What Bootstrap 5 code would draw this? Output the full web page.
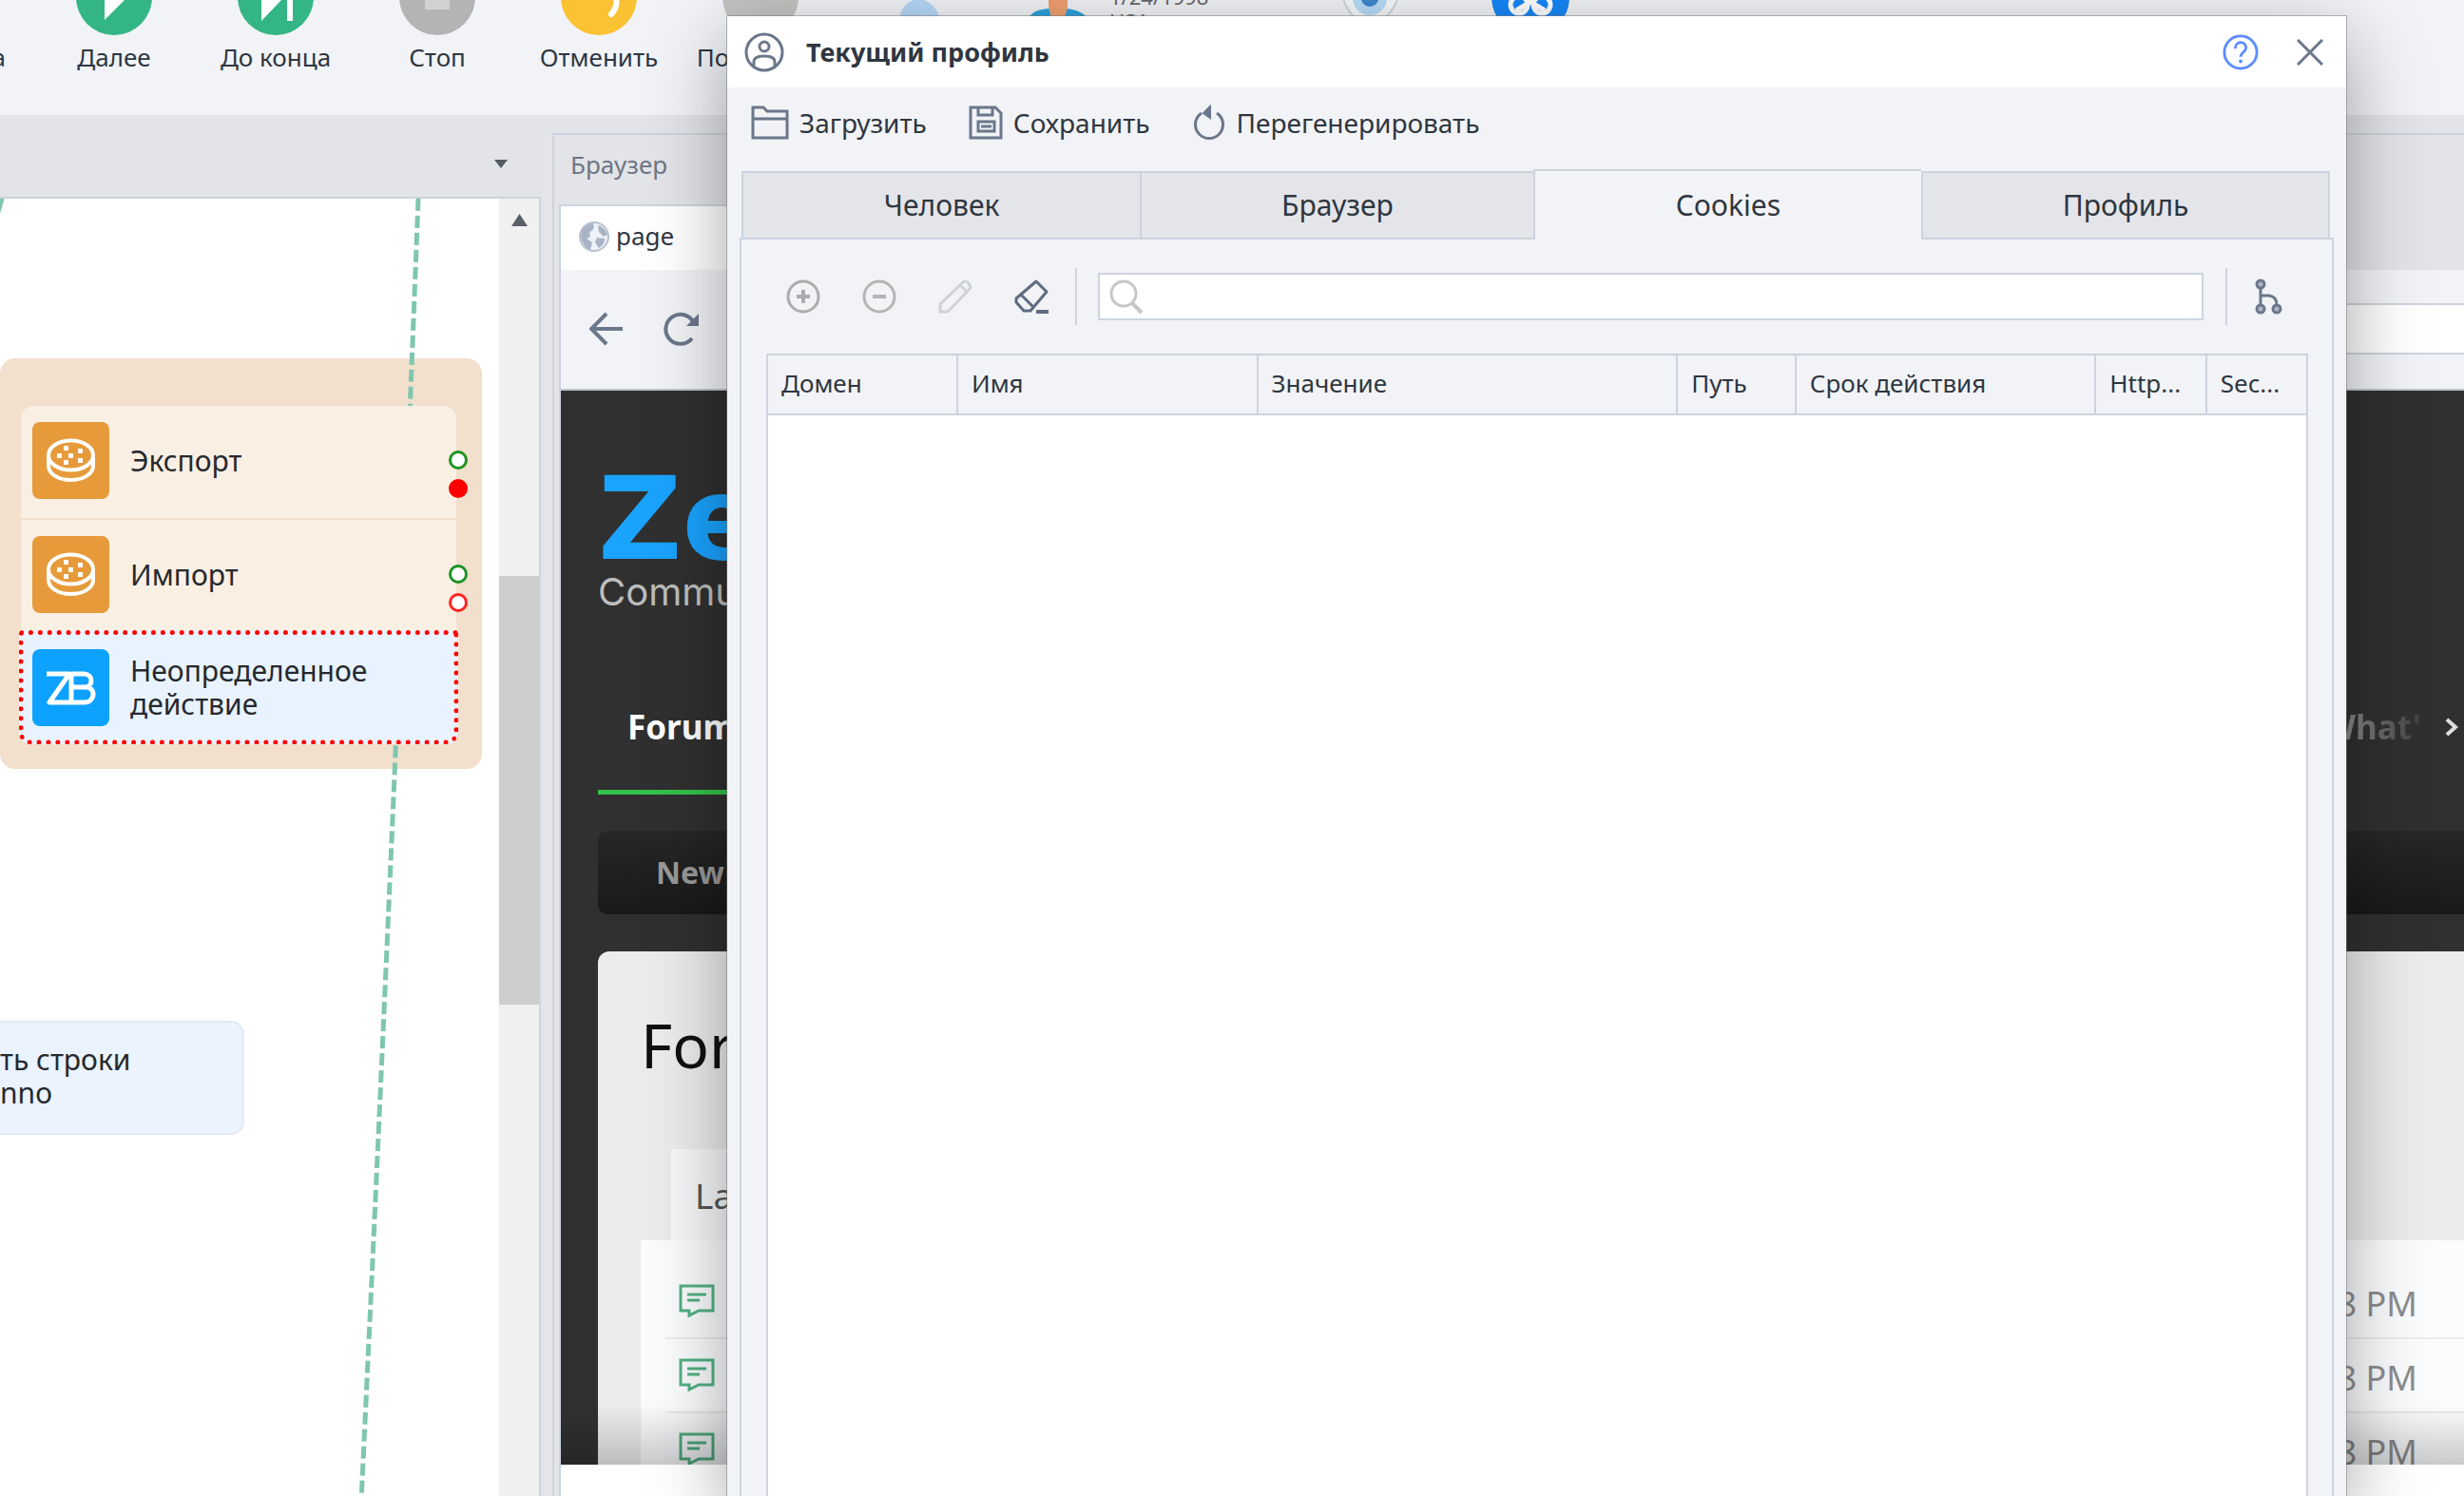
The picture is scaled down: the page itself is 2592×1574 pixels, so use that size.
<!DOCTYPE html>
<html lang="ru">
<head>
<meta charset="utf-8">
<meta name="viewport" content="width=device-width, initial-scale=1">
<title>Текущий профиль</title>
<link href="https://cdn.jsdelivr.net/npm/bootstrap@5.3.0/dist/css/bootstrap.min.css" rel="stylesheet">
<style>
:root{--line:#cdd3df;--chrome:#e3e4e8;--pane:#f1f3f7;--ink:#2f3640;--icon:#6b778a}
body{font-family:"Noto Sans","Open Sans",sans-serif;color:var(--ink);background:var(--chrome);line-height:1.2}
button{font:inherit;color:inherit}
svg{display:block;flex:none}
.plain-btn{background:none;border:0;padding:0}

/* main toolbar, scrolled under the window's top edge */
.top-bar{height:121px;background:var(--pane);overflow:hidden}
.top-items{margin:-43px 0 0 -135px}
.run-btn{width:170px;font-size:26px;line-height:36px;white-space:nowrap}
.run-btn svg{margin-bottom:5px}
.run-far{text-align:right;padding-right:29px}
.status-set{margin-left:62px}
.status-text{width:110px;font-size:22px;line-height:26px;color:#666}

/* script canvas */
.script-pane{width:569px}
.dock-head{height:86px;padding-right:35px}
.canvas-wrap{border:2px solid var(--line);border-left:0;border-bottom:0}
.graph{background:#fff;overflow:hidden}
.graph-line{position:absolute;left:0;top:0}
.node-group{position:absolute;left:0;top:168px;width:507px;height:432px;background:#f2e0cd;border-radius:16px}
.node-stack{position:absolute;left:0;top:168px;width:507px;padding:50px 27px 0 22px}
.node-item{height:120px;padding:0 12px 4px;gap:22px;font-size:30px;line-height:35px;background:#faefe3;border-bottom:2px solid #f2e0cd;color:#26292e}
.node-item:first-child{border-radius:14px 14px 0 0}
.node-item.is-current{background:#e9f3ff;border:5px dotted #f00;border-radius:4px 4px 12px 12px;margin:-4px -2px 0;padding:0 9px}
.node-port{position:absolute;right:-12px;width:20px;height:20px;border-radius:50%;border:3px solid #1c9420;background:#fff}
.port-ok{top:47px}
.port-fail{top:77px;border-color:#f22}
.port-linked{background:#f00;border-color:#f00}
.node-single{position:absolute;left:-22px;top:865px;width:279px;height:120px;padding:21px 20px;font-size:30px;line-height:35px;background:#eaf3fe;border:2px solid #e3eaf5;border-radius:14px;color:#26292e}
.scroll-track{width:42px;background:#f0f0f0}
.scroll-arrow{height:397px;padding:16px 0 0 13px}
.scroll-thumb{height:451px;background:#cdcdcd}

/* browser dock */
.browser-pane{margin:19px 0 0 12px;border:2px solid var(--line);border-right:0;border-bottom:0;min-width:0}
.browser-title{height:73px;padding:13px 17px;font-size:26px;line-height:36px;color:#6d7685}
.browser-inner{margin-left:5px;border-left:2px solid var(--line)}
.tab-row{height:69px;background:var(--chrome)}
.page-tab{width:300px;padding:0 19px 3px;gap:7px;font-size:26px;background:#fff;border-top:2px solid var(--line)}
.nav-row{height:127px;background:var(--pane);border-bottom:2px solid #bfc5cf;padding:0 0 2px 30px;gap:42px}
.address-box{height:54px;border:2px solid var(--line);border-right:0;background:#fff;border-radius:0}
.site{height:1130px;background:#303030;overflow:hidden;padding-left:39px}
.site-logo{margin-top:90px;font:bold 122px/90px "DejaVu Sans",sans-serif;color:#1aa3ff}
.site-sub{font:40px/48px Inter,sans-serif;color:#bdbdbd;margin-top:8px}
.site-nav{margin-top:85px;height:142px;font-size:35px;line-height:66px;font-weight:700}
.nav-current{width:200px;padding-left:31px;color:#fff;border-bottom:5px solid #35c24a;text-decoration:none;height:104px}
.nav-more{color:#fff;height:66px;gap:25px;padding-right:6px}
.nav-fade{background:linear-gradient(90deg,#a0a0a0 0,#6c6c6c 56px,#383838 110px);-webkit-background-clip:text;background-clip:text;color:transparent;text-decoration:none;white-space:nowrap}
.site-bar{height:88px;background:linear-gradient(#272727,#191919);border-radius:10px 0 0 10px;padding-left:61px;font-size:32px;line-height:88px;font-weight:700;color:#999}
.site-bar a,.post-tab{color:inherit;text-decoration:none}
.site-card{margin-top:39px;height:600px;background:#ececec;border-radius:12px 0 0 0;padding:55px 0 0 45px;color:#111}
.site-card h1{font-size:64px;line-height:87px;font-weight:400;margin:0 0 66px}
.post-tab{display:block;width:200px;height:96px;margin-left:32px;padding-left:25px;font-size:37px;line-height:98px;background:#f7f8f9;color:#555}
.post-list{background:#fbfcfe;padding:26px 0 0 26px;margin:0}
.post-item{height:78px;padding:0 49px 0 14px;border-bottom:2px solid #ececec;font-size:36px;color:#8d8d8d}
.post-item span{padding-top:6px}
.fold{position:absolute;left:0;right:0;bottom:0;height:64px;background:linear-gradient(transparent,rgba(0,0,0,.2))}

/* profile dialog */
.profile-win{position:absolute;left:765px;right:124px;top:17px;bottom:0;background:#f2f3f6;box-shadow:0 0 0 1px rgba(120,120,120,.5),0 24px 76px rgba(0,0,0,.36)}
.win-head{height:75px;padding:0 24px 0 18px;gap:32px;background:#fff}
.win-head h2{font-size:27px;font-weight:700;line-height:36px;margin:0 0 0 -9px}
.win-tools{height:73px;padding:0 25px;gap:44px;font-size:28px;line-height:36px}
.win-tools button{gap:11px}
.win-tabs{height:72px;padding:0 17px 0 15px;margin-top:13px}
.win-tab{flex:420 1 0;margin-top:2px;height:70px;background:#e4e5e8;border:2px solid var(--line);border-right:0;border-bottom:0;font-size:30px;padding-bottom:2px}
.win-tab.on{flex-grow:409;margin:0;height:74px;background:#f2f3f6;position:relative}
.win-tab:nth-child(2){flex-grow:414}
.win-tab:last-child{flex-grow:429;border-right:2px solid var(--line)}
.win-panel{margin:0 13px;border:2px solid var(--line);border-bottom:0;padding:30px 25px 0 26px}
.cookie-tools{height:60px;margin-bottom:30px}
.tool-set{gap:42px;padding:0 27px 0 20px;border-right:2px solid var(--line);height:60px}
.find-box{height:50px;margin:0 23px 0 22px}
.find-box svg{position:absolute;left:12px;top:7px}
.find-box input{height:50px;border:2px solid var(--line);border-radius:0;padding-left:56px;font-size:25px}
.tree-set{border-left:2px solid var(--line);height:60px;padding:0 27px 0 28px}
.grid-wrap{background:#fff;border:2px solid var(--line);border-bottom:0}
.grid-head{table-layout:fixed;width:100%;margin:0}
.grid-head th{height:62px;padding:0 14px 1px;background:#f2f3f6;border:2px solid var(--line);border-top:0;font-size:26px;font-weight:400;vertical-align:middle;white-space:nowrap}
.grid-head th:first-child{border-left:0}
.grid-head th:last-child{border-right:0}
</style>
</head>
<body class="vh-100 overflow-hidden position-relative d-flex flex-column">
<svg width="0" height="0" class="position-absolute" aria-hidden="true">
  <symbol id="cookie" viewBox="0 0 81 81"><rect width="81" height="81" rx="8" fill="#e69a3a"/><g fill="none" stroke="#fff" stroke-width="4"><ellipse cx="40.500" cy="35" rx="23.500" ry="15.500"/><path d="M17 37v9c0 9 11 15 23.500 15S64 55 64 46v-9"/></g><g fill="#fff"><rect x="33" y="25" width="5" height="5"/><rect x="48" y="28" width="5" height="5"/><rect x="26" y="33" width="5" height="5"/><rect x="38" y="33" width="5" height="5"/><rect x="48" y="38" width="5" height="5"/><rect x="33" y="40" width="5" height="5"/></g></symbol>
  <symbol id="bubble" viewBox="0 0 38 36"><path d="M2 2h34v26H21l-10 5v-5H2z" fill="none" stroke="#52b182" stroke-width="3"/><path d="M9 11h20M9 17h13" stroke="#52b182" stroke-width="3"/></symbol>
</svg>

<header class="top-bar flex-shrink-0">
  <div class="top-items d-flex align-items-start">
    <button class="plain-btn run-btn run-far flex-shrink-0"><svg width="80" height="80" viewBox="0 0 80 80"><circle cx="40" cy="40" r="40" fill="#34b586"/></svg>Сначала</button>
    <button class="plain-btn run-btn flex-shrink-0"><svg class="mx-auto" width="80" height="80" viewBox="0 0 80 80"><circle cx="40" cy="40" r="40" fill="#34b586"/><path d="M30 22v42l21-21z" fill="#fff"/></svg>Далее</button>
    <button class="plain-btn run-btn flex-shrink-0"><svg class="mx-auto" width="80" height="80" viewBox="0 0 80 80"><circle cx="40" cy="40" r="40" fill="#34b586"/><path d="M25 22v43l21-22zM52 22h6v43h-6z" fill="#fff"/></svg>До конца</button>
    <button class="plain-btn run-btn flex-shrink-0"><svg class="mx-auto" width="80" height="80" viewBox="0 0 80 80"><circle cx="40" cy="40" r="40" fill="#b4b4b4"/><path d="M27 27h26v26H27z" fill="#d2d2d2"/></svg>Стоп</button>
    <button class="plain-btn run-btn flex-shrink-0"><svg class="mx-auto" width="80" height="80" viewBox="0 0 80 80"><circle cx="40" cy="40" r="40" fill="#fbc233"/><path d="M26 26h20c14 8 16 22 7 32" fill="none" stroke="#fff" stroke-width="6" stroke-linecap="round"/></svg>Отменить</button>
    <button class="plain-btn run-btn flex-shrink-0"><svg class="mx-auto" width="80" height="80" viewBox="0 0 80 80"><circle cx="40" cy="40" r="40" fill="#c3c3c2"/></svg>Повторить</button>
    <div class="status-set d-flex align-items-start">
      <svg width="136" height="80" viewBox="0 0 136 80"><path d="M-2 70c0-16 10-28 21-28s24 12 24 28v10H-2z" fill="#b5d8f8"/><path d="M28 80V58l10 14v8z" fill="#eef5fc"/></svg>
      <svg width="84" height="80" viewBox="0 0 84 80"><path d="M-2 80V66c2-12 14-13 22-14h18c10 1 22 4 24 14v14z" fill="#2da3dd"/><path d="M20 30h20v18c-1 12-6 20-10 20s-9-8-10-20z" fill="#f0a070"/></svg>
      <div class="status-text"><br>1/24/1998<br>USA</div>
    </div>
    <svg width="390" height="80" viewBox="0 0 390 80"><path d="M128 20l10 27c6 14 16 20 26 20s20-6 27-20l10-27z" fill="#f8f9fa" stroke="#cfd6dc" stroke-width="2"/><circle cx="164" cy="41" r="18" fill="#b8dcf8"/><circle cx="164" cy="41" r="9" fill="#3c88cc"/><circle cx="333" cy="40" r="41" fill="#1687f8"/><g fill="none" stroke="#fff" stroke-width="5"><circle cx="321" cy="48" r="9"/><circle cx="345" cy="48" r="9"/><path d="M315 34l33 20M351 34l-33 20"/></g></svg>
  </div>
</header>

<main class="d-flex flex-grow-1 overflow-hidden">
  <section class="script-pane d-flex flex-column flex-shrink-0">
    <div class="dock-head d-flex align-items-center justify-content-end flex-shrink-0">
      <button class="plain-btn pt-3" aria-label="Список вкладок"><svg width="14" height="9" viewBox="0 0 14 9"><path d="M0 0h14L7 9z" fill="#555b63"/></svg></button>
    </div>
    <div class="canvas-wrap d-flex flex-grow-1">
      <div class="graph flex-grow-1 position-relative">
        <div class="node-group"></div>
        <svg class="graph-line" width="525" height="1370" viewBox="0 0 525 1370"><g fill="none" stroke="#7fc6b0" stroke-width="5"><path d="M440 0Q416 620 380 1370" stroke-dasharray="13 5"/><path d="M3 -4L-2 14"/></g></svg>
        <div class="node-stack">
          <div class="node-item d-flex align-items-center position-relative"><svg width="81" height="81"><use href="#cookie"/></svg>Экспорт<i class="node-port port-ok"></i><i class="node-port port-fail port-linked"></i></div>
          <div class="node-item d-flex align-items-center position-relative"><svg width="81" height="81"><use href="#cookie"/></svg>Импорт<i class="node-port port-ok"></i><i class="node-port port-fail"></i></div>
          <div class="node-item is-current d-flex align-items-center position-relative"><svg width="81" height="81" viewBox="0 0 81 81"><rect width="81" height="81" rx="8" fill="#0da2ff"/><path d="M15 26h24L18 56h22M41 24v32h14c5 0 9-4 9-8.500S61 40 56 40H43M41 26h13c5 0 8 3 8 7s-3 7-7 7" fill="none" stroke="#fff" stroke-width="5" stroke-linejoin="round"/></svg>Неопределенное<br>действие</div>
        </div>
        <div class="node-single">ть строки<br>nno</div>
      </div>
      <div class="scroll-track flex-shrink-0">
        <div class="scroll-arrow"><svg width="17" height="13" viewBox="0 0 17 13"><path d="M0 13L8.500 0 17 13z" fill="#5b6068"/></svg></div>
        <div class="scroll-thumb"></div>
      </div>
    </div>
  </section>

  <section class="browser-pane flex-grow-1 d-flex flex-column">
    <div class="browser-title flex-shrink-0">Браузер</div>
    <div class="browser-inner flex-grow-1 bg-white">
      <div class="tab-row d-flex"><div class="page-tab d-flex align-items-center">
        <svg width="32" height="32" viewBox="0 0 32 32"><circle cx="16" cy="16" r="15" fill="#eef1f6" stroke="#b9c1d0" stroke-width="2"/><path d="M3 9c4-5 8-7 12-7l1 5-5 5 1 4-4 2 6 4-2 8C5 27 0 19 3 9zM20 4c6 2 9 6 10 10l-4 2-5-5zM19 17l8 1c0 5-3 8-6 10l-4-6z" fill="#a9b3c6"/></svg>page</div></div>
      <div class="nav-row d-flex align-items-center">
        <button class="plain-btn" aria-label="Назад"><svg width="36" height="36" viewBox="0 0 36 36"><path d="M35 18H3M18 2L2 18l16 16" fill="none" stroke="var(--icon)" stroke-width="4"/></svg></button>
        <button class="plain-btn" aria-label="Обновить"><svg width="38" height="38" viewBox="0 0 38 38"><path d="M30 29A15.500 15.500 0 1 1 32 13" fill="none" stroke="var(--icon)" stroke-width="4"/><path d="M37 3v13H24z" fill="var(--icon)"/></svg></button>
        <input class="form-control address-box flex-grow-1" type="text" aria-label="Адрес">
      </div>
      <div class="site position-relative">
        <div class="site-logo">ZennoLab</div>
        <div class="site-sub">Community</div>
        <nav class="site-nav d-flex justify-content-between">
          <a class="nav-current" href="#">Forums</a>
          <div class="nav-more d-flex align-items-center"><a class="nav-fade" href="#">What'</a><svg width="14" height="20" viewBox="0 0 14 20"><path d="M2 2l9 8-9 8" fill="none" stroke="#ddd" stroke-width="4"/></svg></div>
        </nav>
        <div class="site-bar"><a href="#">New posts</a></div>
        <div class="site-card">
          <h1>Forums</h1>
          <a class="post-tab" href="#">Latest</a>
          <ul class="post-list list-unstyled">
            <li class="post-item d-flex align-items-center justify-content-between"><svg width="38" height="36"><use href="#bubble"/></svg><span>8:38 PM</span></li>
            <li class="post-item d-flex align-items-center justify-content-between"><svg width="38" height="36"><use href="#bubble"/></svg><span>8:38 PM</span></li>
            <li class="post-item d-flex align-items-center justify-content-between"><svg width="38" height="36"><use href="#bubble"/></svg><span>8:38 PM</span></li>
          </ul>
        </div>
        <div class="fold"></div>
      </div>
    </div>
  </section>
</main>

<section class="profile-win d-flex flex-column" role="dialog" aria-labelledby="win-title">
  <div class="win-head d-flex align-items-center flex-shrink-0">
    <svg width="42" height="42" viewBox="0 0 42 42"><g fill="none" stroke="var(--icon)" stroke-width="3"><circle cx="21" cy="21" r="19"/><circle cx="21" cy="15" r="5"/><path d="M10 35v-4c0-4 4-6 11-6s11 2 11 6v4"/></g></svg>
    <h2 id="win-title">Текущий профиль</h2>
    <button class="plain-btn ms-auto pe-2" aria-label="Справка"><svg width="38" height="38" viewBox="0 0 40 40"><circle cx="20" cy="20" r="18" fill="none" stroke="#5d8cff" stroke-width="3"/><path d="M14 16c0-9 12-9 12-1 0 5-6 5-6 10" fill="none" stroke="#5d8cff" stroke-width="3"/><circle cx="20" cy="30" r="2" fill="#5d8cff"/></svg></button>
    <button class="plain-btn" aria-label="Закрыть"><svg width="28" height="28" viewBox="0 0 28 28"><path d="M1 1l26 26M27 1L1 27" stroke="var(--icon)" stroke-width="3"/></svg></button>
  </div>
  <div class="win-tools d-flex align-items-center flex-shrink-0">
    <button class="plain-btn d-flex align-items-center"><svg width="40" height="36" viewBox="0 0 40 36"><path d="M2 34V2h11l4 4h21v28zM2 14h36" fill="none" stroke="var(--icon)" stroke-width="3"/></svg>Загрузить</button>
    <button class="plain-btn d-flex align-items-center"><svg width="36" height="36" viewBox="0 0 36 36"><g fill="none" stroke="var(--icon)" stroke-width="3"><path d="M2 2h26l6 6v26H2zM10 2v8h15V2M10 17h17v10H10zM13 22h11"/></g></svg>Сохранить</button>
    <button class="plain-btn d-flex align-items-center"><svg width="36" height="38" viewBox="0 0 36 38"><path d="M10 9A14.500 14.500 0 1 0 26 9" fill="none" stroke="var(--icon)" stroke-width="3"/><path d="M19 2v12l-7-5z" fill="var(--icon)" stroke="var(--icon)" stroke-width="2"/></svg>Перегенерировать</button>
  </div>
  <div class="win-tabs d-flex flex-shrink-0" role="tablist">
    <button class="win-tab" role="tab">Человек</button>
    <button class="win-tab" role="tab">Браузер</button>
    <button class="win-tab on" role="tab" aria-selected="true">Cookies</button>
    <button class="win-tab" role="tab">Профиль</button>
  </div>
  <div class="win-panel d-flex flex-column flex-grow-1">
    <div class="cookie-tools d-flex align-items-center flex-shrink-0">
      <div class="tool-set d-flex align-items-center">
        <button class="plain-btn" aria-label="Добавить"><svg width="38" height="38" viewBox="0 0 38 38"><circle cx="19" cy="19" r="16" fill="none" stroke="#acacac" stroke-width="3"/><path d="M12 19h14M19 12v14" stroke="#acacac" stroke-width="4"/></svg></button>
        <button class="plain-btn" aria-label="Удалить"><svg width="38" height="38" viewBox="0 0 38 38"><circle cx="19" cy="19" r="16" fill="none" stroke="#b4b4b4" stroke-width="3"/><path d="M12 19h14" stroke="#b4b4b4" stroke-width="4"/></svg></button>
        <button class="plain-btn" aria-label="Изменить"><svg width="38" height="38" viewBox="0 0 38 38"><path d="M3 35v-8L27 4c3-3 10 3 7 7L11 35zM24 7l8 8" fill="none" stroke="#cfd2d8" stroke-width="3"/></svg></button>
        <button class="plain-btn" aria-label="Очистить"><svg width="38" height="38" viewBox="0 0 38 38"><path d="M24 3l11 11-17 20h-7l-8-9v-4zM8 17l13 13" fill="none" stroke="#5f6b80" stroke-width="3" stroke-linejoin="round"/><path d="M24 35h13" stroke="#5f6b80" stroke-width="4"/></svg></button>
      </div>
      <div class="find-box position-relative flex-grow-1"><input class="form-control" type="text" aria-label="Поиск"><svg width="36" height="37" viewBox="0 0 36 37"><circle cx="15" cy="15" r="13" fill="none" stroke="#c6c6c6" stroke-width="3"/><path d="M24 25l10 10" stroke="#c6c6c6" stroke-width="4"/></svg></div>
      <div class="tree-set d-flex align-items-center"><button class="plain-btn" aria-label="Группировать"><svg width="30" height="38" viewBox="0 0 30 38"><g fill="#aeb5c0" stroke="var(--icon)" stroke-width="3"><circle cx="7" cy="6" r="4"/><circle cx="7" cy="32" r="4"/><circle cx="24" cy="32" r="4"/><path d="M7 10v18M7 18h9q8 1 8 10" fill="none"/></g></svg></button></div>
    </div>
    <div class="grid-wrap flex-grow-1">
      <table class="grid-head">
        <colgroup><col style="width:12.300%"><col style="width:19.500%"><col style="width:27.300%"><col style="width:7.700%"><col style="width:19.500%"><col style="width:7.200%"><col style="width:6.500%"></colgroup>
        <thead><tr><th scope="col">Домен</th><th scope="col">Имя</th><th scope="col">Значение</th><th scope="col">Путь</th><th scope="col">Срок действия</th><th scope="col">Http...</th><th scope="col">Sec...</th></tr></thead>
      </table>
    </div>
  </div>
</section>
<script src="https://cdn.jsdelivr.net/npm/bootstrap@5.3.0/dist/js/bootstrap.bundle.min.js"></script>
</body>
</html>
